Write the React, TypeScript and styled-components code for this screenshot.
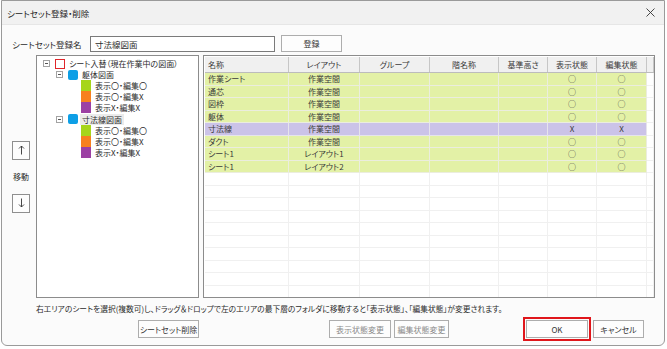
import React from 'react';
import styled, { createGlobalStyle } from 'styled-components';

const GlobalStyle = createGlobalStyle`
  html, body {
    margin: 0;
    padding: 0;
    background: #ffffff;
  }
  body {
    font-family: "Noto Sans CJK JP", "Noto Sans", sans-serif;
    font-feature-settings: "palt";
    color: #2b2b2b;
  }
`;

const Window = styled.div`
  width: 664px;
  height: 346px;
  margin-left: 1px;
  box-sizing: border-box;
  border: 1px solid #9a9a9a;
  border-radius: 0 0 6px 6px;
  background: #fbfbfb;
  display: flex;
  flex-direction: column;
  overflow: hidden;
`;

const TitleBar = styled.div`
  height: 23px;
  flex: none;
  display: flex;
  align-items: center;
  justify-content: space-between;
  padding: 0 9px 0 5px;
  background: #f1f1f1;
  border-bottom: 1px solid #e6e6e6;
  font-size: 8.5px;
  color: #222;
`;

const Body = styled.div`
  flex: 1;
  display: flex;
  flex-direction: column;
  padding: 10px 8px 0 10px;
  font-size: 8px;
`;

const NameRow = styled.div`
  display: flex;
  align-items: center;
  height: 17px;
`;

const NameLabel = styled.span`
  width: 78px;
  font-size: 8.5px;
`;

const NameInput = styled.div`
  width: 185px;
  height: 16px;
  box-sizing: border-box;
  border: 1px solid #7a7a7a;
  background: #fff;
  padding: 0 4px;
  display: flex;
  align-items: center;
  font-size: 8.5px;
`;

const Button = styled.button<{ $w: number; $h?: number; $dim?: boolean; $mark?: boolean }>`
  width: ${(p) => p.$w}px;
  height: ${(p) => p.$h ?? 18}px;
  box-sizing: border-box;
  padding: 0;
  margin: 0;
  border: 1px solid #adadad;
  background: #fdfdfd;
  font-family: inherit;
  font-feature-settings: "palt";
  font-size: 8px;
  color: ${(p) => (p.$dim ? '#8a8a8a' : '#333')};
  outline: ${(p) => (p.$mark ? '2px solid #e0161b' : 'none')};
  outline-offset: 1px;
`;

const Main = styled.div`
  margin-top: 3px;
  height: 243px;
  display: flex;
`;

const MoveColumn = styled.div`
  width: 18px;
  display: flex;
  flex-direction: column;
  align-items: center;
  justify-content: center;
  gap: 11px;
  margin-right: 6px;
`;

const MoveLabel = styled.span`
  font-size: 8px;
  line-height: 12px;
`;

const ArrowButton = styled.div`
  width: 18px;
  height: 19px;
  box-sizing: border-box;
  border: 1px solid #8f8f8f;
  background: #fdfdfd;
  display: flex;
  align-items: center;
  justify-content: center;
`;

const TreePanel = styled.div`
  width: 163px;
  box-sizing: border-box;
  border: 1px solid #8c8c8c;
  background: #fff;
  padding-top: 2px;
  margin-right: 4px;
`;

const TreeRow = styled.div<{ $level: number }>`
  height: 11.1px;
  display: flex;
  align-items: center;
  padding-left: ${(p) => 6 + p.$level * 13}px;
  white-space: nowrap;
`;

const ExpanderSlot = styled.div`
  width: 12px;
  flex: none;
  display: flex;
  align-items: center;
`;

const Expander = styled.div`
  width: 7px;
  height: 7px;
  box-sizing: border-box;
  border: 1px solid #a3a3a3;
  position: relative;
  &::after {
    content: '';
    position: absolute;
    left: 1px;
    right: 1px;
    top: 2px;
    height: 1px;
    background: #555;
  }
`;

const CheckIcon = styled.div`
  width: 10px;
  height: 10px;
  box-sizing: border-box;
  border: 1px solid #e0262a;
  background: #fff;
  flex: none;
`;

const FolderIcon = styled.div`
  width: 10px;
  height: 10px;
  border-radius: 2px;
  background: #0d9fe6;
  flex: none;
`;

const StateIcon = styled.div<{ $color: string }>`
  width: 10px;
  height: 11.1px;
  background: ${(p) => p.$color};
  flex: none;
`;

const TreeLabel = styled.span<{ $selected?: boolean }>`
  margin-left: 2px;
  padding: 0 2px;
  line-height: 11px;
  font-size: 8px;
  background: ${(p) => (p.$selected ? '#ebebeb' : 'transparent')};
`;

const TablePanel = styled.div`
  width: 452px;
  box-sizing: border-box;
  border: 1px solid #8c8c8c;
  background: #fff;
  padding: 1px 0 0 1px;
  overflow: hidden;
`;

const COLS = '84px 71px 70px 69px 49px 49px 50px 1fr';

const HeaderRow = styled.div`
  display: grid;
  grid-template-columns: ${COLS};
  height: 16px;
  background: #f0f0f0;
  border-bottom: 1px solid #bcbcbc;
  box-sizing: border-box;
`;

const HeaderCell = styled.div<{ $left?: boolean }>`
  display: flex;
  align-items: center;
  justify-content: ${(p) => (p.$left ? 'flex-start' : 'center')};
  padding-left: ${(p) => (p.$left ? '3px' : '0')};
  border-right: 1px solid #c6c6c6;
  font-size: 8px;
  color: #3a3a3a;
`;

const DataRow = styled.div`
  display: grid;
  grid-template-columns: ${COLS};
  height: 12.5px;
`;

const Cell = styled.div<{ $bg?: string; $left?: boolean }>`
  display: flex;
  align-items: center;
  justify-content: ${(p) => (p.$left ? 'flex-start' : 'center')};
  padding-left: ${(p) => (p.$left ? '3px' : '0')};
  background: ${(p) => p.$bg ?? '#fff'};
  border-right: 1px solid rgba(236, 236, 236, 0.8);
  border-bottom: 1px solid rgba(236, 236, 236, 0.8);
  font-size: 8px;
  color: #3a3a3a;
  white-space: nowrap;
  overflow: hidden;
`;

const Note = styled.div`
  margin-top: 5px;
  padding-left: 24px;
  height: 12px;
  line-height: 12px;
  font-size: 7.75px;
  white-space: nowrap;
`;

const Footer = styled.div`
  margin-top: 5px;
  display: flex;
  align-items: center;
`;

const ButtonGroup = styled.div<{ $ml: number; $gap: number }>`
  display: flex;
  margin-left: ${(p) => p.$ml}px;
  gap: ${(p) => p.$gap}px;
`;

const GREEN = '#e3f1a6';
const PURPLE = '#cbc3e8';

const headers = ['名称', 'レイアウト', 'グループ', '階名称', '基準高さ', '表示状態', '編集状態'];

const rows = [
  { name: '作業シート', layout: '作業空間', show: '○', edit: '○', bg: GREEN },
  { name: '通芯', layout: '作業空間', show: '○', edit: '○', bg: GREEN },
  { name: '図枠', layout: '作業空間', show: '○', edit: '○', bg: GREEN },
  { name: '躯体', layout: '作業空間', show: '○', edit: '○', bg: GREEN },
  { name: '寸法線', layout: '作業空間', show: 'X', edit: 'X', bg: PURPLE },
  { name: 'ダクト', layout: '作業空間', show: '○', edit: '○', bg: GREEN },
  { name: 'シート1', layout: 'レイアウト1', show: '○', edit: '○', bg: GREEN },
  { name: 'シート1', layout: 'レイアウト2', show: '○', edit: '○', bg: GREEN },
];

type TreeItem = {
  level: number;
  kind: 'check' | 'folder' | 'state';
  color?: string;
  label: string;
  selected?: boolean;
};

const tree: TreeItem[] = [
  { level: 0, kind: 'check', label: 'シート入替（現在作業中の図面）' },
  { level: 1, kind: 'folder', label: '躯体図面' },
  { level: 2, kind: 'state', color: '#a6d51b', label: '表示〇・編集〇' },
  { level: 2, kind: 'state', color: '#f7801f', label: '表示〇・編集X' },
  { level: 2, kind: 'state', color: '#9c40a4', label: '表示X・編集X' },
  { level: 1, kind: 'folder', label: '寸法線図面', selected: true },
  { level: 2, kind: 'state', color: '#a6d51b', label: '表示〇・編集〇' },
  { level: 2, kind: 'state', color: '#f7801f', label: '表示〇・編集X' },
  { level: 2, kind: 'state', color: '#9c40a4', label: '表示X・編集X' },
];

const CloseIcon = () => (
  <svg width="9" height="9" viewBox="0 0 9 9">
    <path d="M0.5 0.5 L8.5 8.5 M8.5 0.5 L0.5 8.5" stroke="#333" strokeWidth="0.9" fill="none" />
  </svg>
);

const ArrowIcon = ({ down }: { down?: boolean }) => (
  <svg width="7" height="10" viewBox="0 0 7 10">
    {down ? (
      <path d="M3.5 0.5 V9 M1 6.5 L3.5 9 L6 6.5" stroke="#333" strokeWidth="0.9" fill="none" />
    ) : (
      <path d="M3.5 9.5 V1 M1 3.5 L3.5 1 L6 3.5" stroke="#333" strokeWidth="0.9" fill="none" />
    )}
  </svg>
);

const renderIcon = (item: TreeItem) => {
  if (item.kind === 'check') return <CheckIcon />;
  if (item.kind === 'folder') return <FolderIcon />;
  return <StateIcon $color={item.color ?? '#ccc'} />;
};

const App = () => {
  const empty = Array.from({ length: 12 });
  return (
    <>
      <GlobalStyle />
      <Window>
        <TitleBar>
          <span>シートセット登録・削除</span>
          <CloseIcon />
        </TitleBar>
        <Body>
          <NameRow>
            <NameLabel>シートセット登録名</NameLabel>
            <NameInput>寸法線図面</NameInput>
            <Button $w={61} $h={17} style={{ marginLeft: 6 }}>
              登録
            </Button>
          </NameRow>
          <Main>
            <MoveColumn>
              <ArrowButton>
                <ArrowIcon />
              </ArrowButton>
              <MoveLabel>移動</MoveLabel>
              <ArrowButton>
                <ArrowIcon down />
              </ArrowButton>
            </MoveColumn>
            <TreePanel>
              {tree.map((item, i) => (
                <TreeRow key={i} $level={item.level}>
                  <ExpanderSlot>{item.level < 2 && <Expander />}</ExpanderSlot>
                  {renderIcon(item)}
                  <TreeLabel $selected={item.selected}>{item.label}</TreeLabel>
                </TreeRow>
              ))}
            </TreePanel>
            <TablePanel>
              <HeaderRow>
                {headers.map((h, i) => (
                  <HeaderCell key={h} $left={i === 0}>
                    {h}
                  </HeaderCell>
                ))}
                <HeaderCell />
              </HeaderRow>
              {rows.map((r, i) => (
                <DataRow key={i}>
                  <Cell $bg={r.bg} $left>
                    {r.name}
                  </Cell>
                  <Cell $bg={r.bg}>{r.layout}</Cell>
                  <Cell $bg={r.bg} />
                  <Cell $bg={r.bg} />
                  <Cell $bg={r.bg} />
                  <Cell $bg={r.bg}>{r.show}</Cell>
                  <Cell $bg={r.bg}>{r.edit}</Cell>
                  <Cell />
                </DataRow>
              ))}
              {empty.map((_, i) => (
                <DataRow key={`e${i}`}>
                  {Array.from({ length: 8 }).map((__, j) => (
                    <Cell key={j} />
                  ))}
                </DataRow>
              ))}
            </TablePanel>
          </Main>
          <Note>
            右エリアのシートを選択(複数可)し、ドラッグ＆ドロップで左のエリアの最下層のフォルダに移動すると「表示状態」、「編集状態」が変更されます。
          </Note>
          <Footer>
            <ButtonGroup $ml={126} $gap={0}>
              <Button $w={61}>シートセット削除</Button>
            </ButtonGroup>
            <ButtonGroup $ml={130} $gap={3}>
              <Button $w={62} $dim>
                表示状態変更
              </Button>
              <Button $w={55} $dim>
                編集状態変更
              </Button>
            </ButtonGroup>
            <ButtonGroup $ml={77} $gap={5}>
              <Button $w={62} $mark>
                OK
              </Button>
              <Button $w={51}>キャンセル</Button>
            </ButtonGroup>
          </Footer>
        </Body>
      </Window>
    </>
  );
};

export default App;
